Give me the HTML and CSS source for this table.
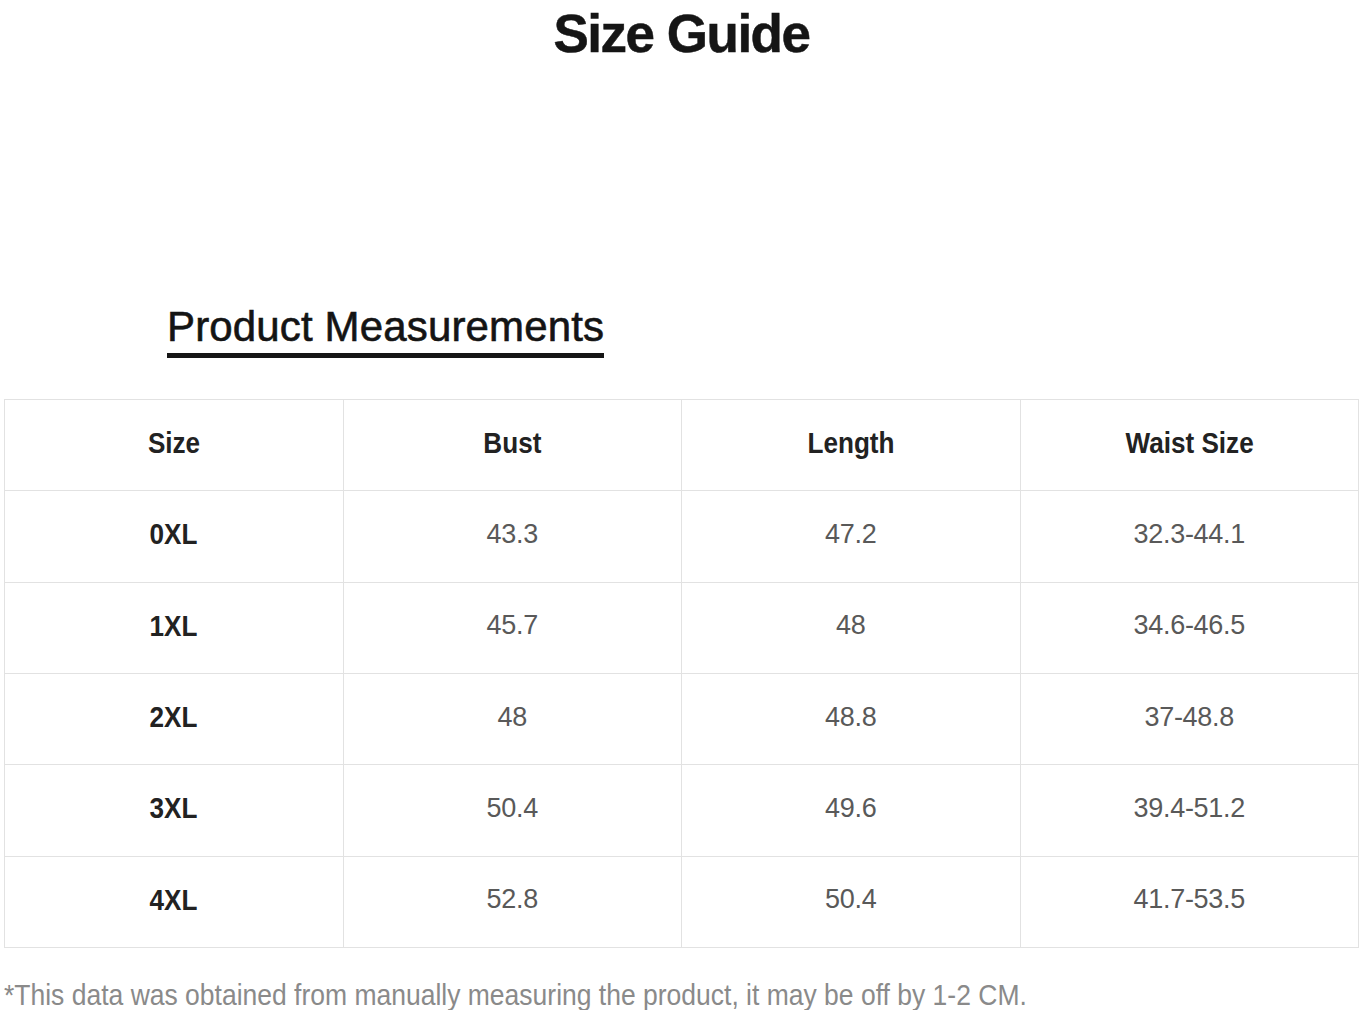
FILE: index.html
```html
<!DOCTYPE html>
<html lang="en">
<head>
<meta charset="utf-8">
<title>Size Guide</title>
<link rel="stylesheet" href="styles.css">
</head>
<body>
<h1 class="title">Size Guide</h1>
<div class="section">
  <h2 class="section-title">Product Measurements</h2>
</div>
<table class="size-table">
  <thead>
    <tr>
      <th><span class="narrow">Size</span></th>
      <th><span class="narrow">Bust</span></th>
      <th><span class="narrow">Length</span></th>
      <th><span class="narrow">Waist Size</span></th>
    </tr>
  </thead>
  <tbody>
    <tr><td class="size"><span class="narrow">0XL</span></td><td>43.3</td><td>47.2</td><td>32.3-44.1</td></tr>
    <tr><td class="size"><span class="narrow">1XL</span></td><td>45.7</td><td>48</td><td>34.6-46.5</td></tr>
    <tr><td class="size"><span class="narrow">2XL</span></td><td>48</td><td>48.8</td><td>37-48.8</td></tr>
    <tr><td class="size"><span class="narrow">3XL</span></td><td>50.4</td><td>49.6</td><td>39.4-51.2</td></tr>
    <tr><td class="size"><span class="narrow">4XL</span></td><td>52.8</td><td>50.4</td><td>41.7-53.5</td></tr>
  </tbody>
</table>
<p class="note"><span class="note-text">*This data was obtained from manually measuring the product, it may be off by 1-2 CM.</span></p>
</body>
</html>
```
FILE: styles.css
```css
html, body {
  margin: 0;
  padding: 0;
  background: #ffffff;
}
body {
  font-family: "Liberation Sans", Arial, sans-serif;
  color: #111;
}
.title {
  margin: 0;
  padding-top: 4px;
  font-size: 53px;
  line-height: 60px;
  font-weight: 700;
  letter-spacing: -1.5px;
  text-align: center;
  color: #151515;
  -webkit-text-stroke: 0.5px #151515;
}
.section {
  margin-top: 239px;
  padding-left: 167px;
}
.section-title {
  display: inline-block;
  margin: 0;
  font-size: 42px;
  line-height: 48px;
  font-weight: 400;
  letter-spacing: 0.15px;
  color: #141414;
  -webkit-text-stroke: 0.6px #141414;
  padding-bottom: 2px;
  border-bottom: 5px solid #151515;
}
.size-table {
  margin: 41px 0 0 4px;
  width: 1355px;
  border-collapse: collapse;
  table-layout: fixed;
}
.size-table th,
.size-table td {
  border: 1px solid #e2e2e2;
  height: 91.33px;
  padding: 0 0 4px;
  text-align: center;
  vertical-align: middle;
  box-sizing: border-box;
}
.narrow {
  display: inline-block;
  transform: scaleX(0.87);
  white-space: nowrap;
}
.size-table th,
.size-table td.size {
  font-size: 30px;
  font-weight: 700;
  color: #222;
  letter-spacing: 0;
}
.size-table td {
  font-size: 27px;
  color: #595959;
  letter-spacing: -0.3px;
}
.note {
  margin: 32px 0 0 4px;
  font-size: 30px;
  line-height: 30px;
  color: #8a8a8a;
  white-space: nowrap;
}
.note-text {
  display: inline-block;
  transform: scaleX(0.883);
  transform-origin: left center;
}
```
